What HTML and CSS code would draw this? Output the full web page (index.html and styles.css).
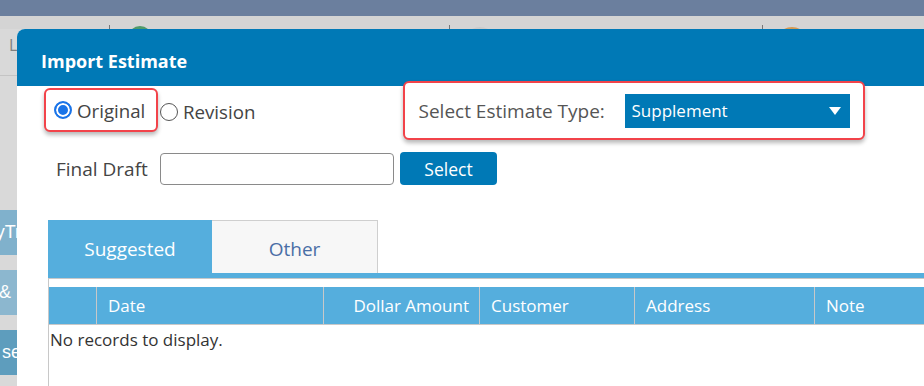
FILE: index.html
```html
<!DOCTYPE html>
<html>
<head>
<meta charset="utf-8">
<link rel="stylesheet" href="styles.css">
</head>
<body>
<div class="topbar"></div>
<div class="navbar">
  <div class="nav-cell w109"></div>
  <div class="sep"></div>
  <div class="nav-cell w339"><span class="dot green"></span></div>
  <div class="sep"></div>
  <div class="nav-cell w312"><span class="dot faint"></span></div>
  <div class="sep"></div>
  <div class="nav-cell grow"><span class="dot orange"></span></div>
</div>
<div class="main">
  <div class="side">
    <div class="side-l">L</div>
    <div class="side-line"></div>
    <div class="side-btn b1"><span>yTr</span></div>
    <div class="side-btn b2"><span>&amp; :</span></div>
    <div class="side-btn b3"><span>se</span></div>
  </div>
  <div class="dialog">
    <div class="dlg-head">Import Estimate</div>
    <div class="dlg-body">
      <div class="row1">
        <div class="hl hl1">
          <label class="radio"><span class="rb checked"></span><span class="rlabel">Original</span></label>
        </div>
        <label class="radio rev"><span class="rb"></span><span class="rlabel">Revision</span></label>
        <div class="hl hl2">
          <span class="type-label">Select Estimate Type:</span>
          <div class="select"><span>Supplement</span><span class="caret"></span></div>
        </div>
      </div>
      <div class="row2">
        <span class="fd-label">Final Draft</span>
        <div class="input"></div>
        <div class="btn">Select</div>
      </div>
      <div class="grid">
        <div class="tabs">
          <div class="tab active">Suggested</div>
          <div class="tab">Other</div>
        </div>
        <div class="tabline"></div>
        <div class="table">
          <div class="thead">
            <div class="th c0"></div>
            <div class="th c1">Date</div>
            <div class="th c2 right">Dollar Amount</div>
            <div class="th c3">Customer</div>
            <div class="th c4">Address</div>
            <div class="th c5">Note</div>
          </div>
          <div class="empty">No records to display.</div>
        </div>
      </div>
    </div>
  </div>
</div>
</body>
</html>
```
FILE: styles.css
```css
* { box-sizing: border-box; }
html, body { margin: 0; padding: 0; }
body {
  width: 924px;
  height: 386px;
  overflow: hidden;
  background: #d9d9d9;
  font-family: "Open Sans", "Noto Sans", sans-serif;
  display: flex;
  flex-direction: column;
}
.topbar { height: 16px; background: #6b7f9e; flex: none; }
.navbar {
  height: 13px;
  background: #d4d4d4;
  display: flex;
  overflow: hidden;
  flex: none;
}
.nav-cell { display: flex; justify-content: flex-start; }
.w109 { width: 109px; }
.w339 { width: 339px; }
.w312 { width: 312px; }
.grow { flex: 1; }
.sep { width: 1px; height: 4px; margin-top: 9px; background: #777; }
.dot { width: 24px; height: 24px; border-radius: 50%; margin-top: 10px; display: block; }
.green { background: #4f9a6a; margin-left: 18px; }
.faint { background: #cacaca; margin-left: 16px; width: 28px; margin-top: 11px; }
.orange { background: #d49a52; margin-left: 15px; width: 28px; margin-top: 11px; }

.main { flex: 1; display: flex; min-height: 0; }
.side {
  width: 17px;
  flex: none;
  display: flex;
  flex-direction: column;
  overflow: hidden;
  background: #d9d9d9;
}
.side-l {
  color: #808080;
  font-size: 16px;
  line-height: 16px;
  padding: 8px 0 0 9px;
  height: 46px;
}
.side-line { height: 1px; background: #c4c4c4; }
.side-btn {
  height: 45px;
  display: flex;
  justify-content: flex-end;
  align-items: center;
  color: #fff;
  font-size: 18px;
  white-space: nowrap;
  font-family: "Liberation Sans", sans-serif;
}
.side-btn span { margin-right: -4px; }
.b1 { background: #80b1cc; margin-top: 134px; }
.b2 { background: #8cb7cf; margin-top: 15px; }
.b3 { background: #5e9dbd; margin-top: 15px; }

.dialog {
  flex: 1;
  background: #fff;
  border-top-left-radius: 8px;
  overflow: hidden;
  display: flex;
  flex-direction: column;
}
.dlg-head {
  height: 57px;
  background: #0079b6;
  color: #fff;
  font-weight: 700;
  font-size: 18px;
  padding: 20px 0 0 24px;
  flex: none;
}
.dlg-body { display: flex; flex-direction: column; }

.row1 { display: flex; align-items: flex-start; height: 66px; }
.hl {
  border: 2.5px solid #f2434a;
  border-radius: 6px;
  box-shadow: 0 3px 4px rgba(0,0,0,0.28);
  background: #fff;
  flex: none;
}
.hl1 {
  margin: 2px 0 0 27px;
  width: 114px;
  height: 44px;
  display: flex;
  align-items: center;
  padding-left: 8px;
}
.radio { display: flex; align-items: center; color: #444; font-size: 18.7px; white-space: nowrap; }
.rb {
  width: 18px; height: 18px; border-radius: 50%;
  border: 1px solid #555;
  display: inline-block;
  margin-right: 5px;
  background: #fff;
  flex: none;
}
.rb.checked {
  border: 2px solid #1a74e8;
  box-shadow: inset 0 0 0 2px #fff;
  background: #1a74e8;
}
.rev { margin: 13px 0 0 2px; width: 100px; flex: none; }
.hl2 {
  margin: -5px 0 0 143px;
  width: 462px;
  height: 59px;
  display: flex;
  align-items: center;
  padding-left: 13.5px;
}
.type-label { color: #555; font-size: 19px; width: 206px; flex: none; white-space: nowrap; }
.select {
  width: 225px;
  height: 34px;
  background: #0079b6;
  color: #fff;
  font-size: 17px;
  display: flex;
  align-items: center;
  justify-content: space-between;
  padding: 0 9px 0 7px;
  flex: none;
}
.caret {
  width: 0; height: 0;
  border-left: 6px solid transparent;
  border-right: 6px solid transparent;
  border-top: 8px solid #fff;
}

.row2 { display: flex; align-items: center; height: 33px; padding-left: 39px; }
.fd-label { color: #444; font-size: 19px; width: 104px; flex: none; }
.input {
  width: 234px; height: 32px;
  border: 1px solid #8a8a8a;
  border-radius: 4px;
}
.btn {
  margin-left: 6px;
  width: 97px; height: 33px;
  background: #0079b6;
  border-radius: 4px;
  color: #fff;
  font-size: 17.5px;
  display: flex; align-items: center; justify-content: center;
}

.grid { margin: 35px 0 0 31px; display: flex; flex-direction: column; }
.tabs { display: flex; height: 53px; }
.tab {
  width: 166px;
  display: flex; align-items: center; justify-content: center;
  font-size: 19px;
  color: #4a6ea6;
  background: #f7f7f7;
  border: 1px solid #cfcfcf;
  border-bottom: none;
  border-left: none;
  padding-top: 4px;
}
.tab.active { width: 164px; background: #55aedd; color: #fff; border: none; }
.tabline { height: 6px; background: #55aedd; border-bottom: 1px solid #c8c8c8; }
.table { border-left: 1px solid #c8c8c8; padding-top: 8px; height: 120px; }
.thead {
  display: flex;
  height: 38px;
  background: #55aedd;
  border-bottom: 1px solid #c8c8c8;
}
.th {
  color: #fff;
  font-size: 17px;
  display: flex; align-items: center;
  border-right: 1px solid #c8c8c8;
  padding-left: 11px;
  white-space: nowrap;
}
.th.right { justify-content: flex-end; padding-right: 10px; }
.c0 { width: 48px; }
.c1 { width: 227px; }
.c2 { width: 156px; }
.c3 { width: 155px; }
.c4 { width: 180px; }
.c5 { flex: 1; border-right: none; }
.empty { color: #333; font-size: 17px; padding: 3px 0 0 1px; }
```
